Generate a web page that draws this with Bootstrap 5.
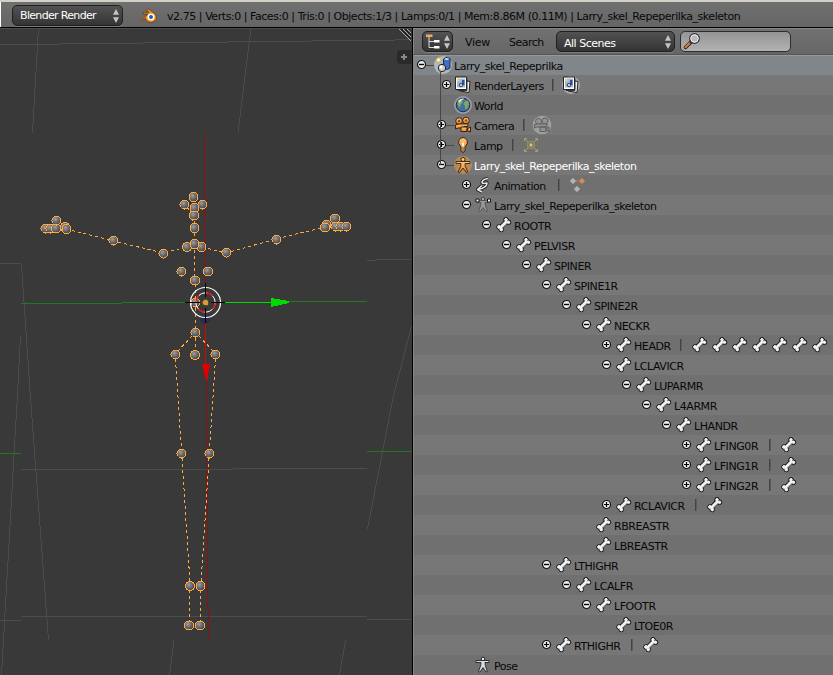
<!DOCTYPE html>
<html lang="en">
<head>
<meta charset="utf-8">
<title>Blender</title>
<link rel="stylesheet" href="https://cdn.jsdelivr.net/npm/bootstrap@5.3.0/dist/css/bootstrap.min.css">
<style>
body{font:11px/20px "DejaVu Sans",sans-serif;color:#080808;background:#393939;width:833px;height:675px;letter-spacing:-.49px}
.info-bar{height:28px;background:linear-gradient(#707070,#656565);border-top:2px solid #d4d0c8;border-bottom:1px solid #000;box-shadow:inset 1px 0 #fff;padding:3px 0 0 12px}
.picker{height:21px;background:linear-gradient(#525252,#343434);border:1px solid #202020;border-radius:5px;color:#fff;box-shadow:0 1px #7b7b7b;padding:0 3px 0 7px;line-height:19px}
.engine{width:111px;letter-spacing:-.67px}.scenes{width:119px;margin-left:12px}.kind{width:31px;padding:0}
.logo{margin:3px 0 0 18px}
.stats{margin-left:10px;line-height:23px;letter-spacing:-.445px}
.view3d{width:412px}
.outliner{border-left:1px solid #000;background:#737373;width:421px}
.tool-bar{height:27px;background:linear-gradient(#727272,#666);border-bottom:1px solid #565656;box-shadow:inset 1px 1px #858585;padding:3px 0 0 9px}
.find{width:111px;height:21px;margin-left:5px;border:1px solid #2e2e2e;border-radius:5px;background:linear-gradient(#949494,#b2b2b2)}
.menu-view{margin-left:12px;width:25px;line-height:23px;letter-spacing:-.3px}.menu-search{margin-left:19px;width:35px;line-height:23px}
.tree{border-left:1px solid #858585}
.line{height:20px;background:#707070;padding-left:calc(var(--depth)*20px)}
.line:nth-child(even){background:#777}
.line:first-child{background:#80868a;box-shadow:inset 0 1px #959a9d}
.fold{width:19px;height:20px;padding-left:2px;padding-top:4px;line-height:0}
.fold.near{padding-left:7px}
.fold svg{width:11px;height:11px;display:block}
.glyph{width:20px;height:20px;display:block}
.name{padding:2px 0 0 1px;white-space:pre;width:var(--w,auto)}
.bone-name{letter-spacing:-.42px}
.lit{color:#fff}
.bar-sep{width:1px;height:12px;background:#444;margin:4px 8px 0 9px;box-shadow:1px 0 #5c5c5c}
.branch{left:12px;top:9px;z-index:1;width:40px;height:108px}
</style>
<script src="https://cdn.jsdelivr.net/npm/bootstrap@5.3.0/dist/js/bootstrap.bundle.min.js"></script>
</head>
<body class="m-0 overflow-hidden">
<svg width="0" height="0" class="position-absolute">
<defs>
<radialGradient id="ball" cx=".38" cy=".35" r=".7"><stop offset="0" stop-color="#a0a0a0"/><stop offset=".4" stop-color="#747478"/><stop offset="1" stop-color="#404046"/></radialGradient>
<linearGradient id="gold" x2="0" y2="1"><stop offset="0" stop-color="#ffc98a"/><stop offset="1" stop-color="#e87d1c"/></linearGradient>
</defs>
<symbol id="arrows" viewBox="0 0 6 14"><path d="M3 0 6 5.800H0zM3 14 0 8.200h6z" fill="#c4c4c4"/></symbol>
<symbol id="plus" viewBox="0 0 11 11"><circle cx="5.5" cy="5.5" r="4" fill="#eee" stroke="#111" stroke-width="1.2"/><path d="M3 5.5h5M5.5 3v5" stroke="#000" stroke-width="1.2"/></symbol>
<symbol id="minus" viewBox="0 0 11 11"><circle cx="5.5" cy="5.5" r="4" fill="#eee" stroke="#111" stroke-width="1.2"/><path d="M3 5.5h5" stroke="#000" stroke-width="1.4"/></symbol>
<symbol id="bone" viewBox="0 0 20 20">
<g fill="#1a1a1a" stroke="#1a1a1a"><path d="M7 13 14 6" stroke-width="4.600"/><circle cx="6" cy="12" r="2.300"/><circle cx="8.300" cy="14.500" r="2.300"/><circle cx="13" cy="4.800" r="2.300"/><circle cx="15.500" cy="7.300" r="2.300"/></g>
<g fill="#f2f2f2" stroke="#f2f2f2"><path d="M7 13 14 6" stroke-width="2.800"/><circle cx="6" cy="12" r="1.400"/><circle cx="8.300" cy="14.500" r="1.400"/><circle cx="13" cy="4.800" r="1.300"/><circle cx="15.500" cy="7.300" r="1.300"/></g><path d="M9.300 13 14 8.400" stroke="#b8b8b8"/></symbol>
<symbol id="scene" viewBox="0 0 20 20"><circle cx="10" cy="10" r="9" fill="#b3b8ba"/><path d="M10.500 4 13 2.500 17 3.500V13L14.500 14.500 10.500 13.500z" fill="#3d6fc4" stroke="#1b2c50"/><path d="M11 4.300 13 3 16.500 3.800 14.500 5z" fill="#dfeaff"/><circle cx="9" cy="13" r="3.700" fill="#ccc" stroke="#222"/><circle cx="8" cy="12" r="1.500" fill="#fff"/><circle cx="5.500" cy="5" r="2" fill="#fffbd0" stroke="#d8c92f"/></symbol>
<symbol id="layers" viewBox="0 0 20 20"><path d="M8 5 17 6.500 16 17.500 7 16z" fill="#eee" stroke="#222"/><path d="M5 3.500h9v12H5z" fill="#fff" stroke="#333"/><path d="M2.500 2h11v12.500h-11z" fill="#fff" stroke="#222"/><path d="M4 3.500h8v9H4z" fill="#9fbce8"/><path d="M9 5h2.500v5H9z" fill="#2c5099"/><circle cx="8" cy="10" r="1.800" fill="#ccc" stroke="#222" stroke-width=".8"/><circle cx="5.500" cy="5" r="1.300" fill="#f2dd3c"/></symbol>
<symbol id="layers2" viewBox="0 0 20 20"><circle cx="10" cy="10" r="9" fill="#aaa"/><use href="#layers" width="20" height="20"/></symbol>
<symbol id="world" viewBox="0 0 20 20"><circle cx="10" cy="10" r="9" fill="#9b9bad"/><circle cx="10" cy="10" r="6.800" fill="#44709f" stroke="#1f2c3c"/><path d="M5 6q3-3 6-2.500L9 6l1 1.500L7.500 10 7 13 4.500 9.500zM12 6l3-.5 1.300 4-2 4-2 1L12 11l-1.500-2z" fill="#7ca865"/><path d="M5 6q3-3 6-2.300Q8 5 6.500 8z" fill="#dceadd"/></symbol>
<symbol id="camera" viewBox="0 0 20 20"><g fill="url(#gold)" stroke="#3c230d"><circle cx="6" cy="6" r="3.300"/><circle cx="13" cy="5.500" r="3.300"/><path d="M6 9h9v2.500h-4L9.500 13H5.500L2.500 14V10z"/><path d="M8 12h6v4.500H8zM14 14l3.500-2v5L14 15.500z"/></g><circle cx="6" cy="6" r="1.200" fill="#8b4a16"/><circle cx="13" cy="5.500" r="1.200" fill="#8b4a16"/></symbol>
<symbol id="camera2" viewBox="0 0 20 20"><circle cx="10" cy="10" r="9.300" fill="#a0a0a0"/><g fill="#929292" stroke="#5f5f5f"><circle cx="6.500" cy="6.500" r="3"/><circle cx="13" cy="6" r="3"/><path d="M5 9h10v3H5L2.500 13V9.500zM8 12h6v4.500H8zM14 14l3-2v4.500L14 15z"/></g></symbol>
<symbol id="lamp" viewBox="0 0 20 20"><path d="M10 2.500a4.700 4.700 0 0 0-3 8l1 1.500v4l2 1.500 2-1.500v-4l1-1.500a4.700 4.700 0 0 0-3-8z" fill="url(#gold)" stroke="#3c230d"/><path d="M9 7.500h2v4H9z" fill="#fff2d8"/><path d="M8 13h4M8 15h4" stroke="#777"/></symbol>
<symbol id="lampdata" viewBox="0 0 20 20"><path d="M6 3.500H3.500V6M14 3.500h2.500V6M6 16.500H3.500V14M14 16.500h2.500V14M4 4l3 3M16 4l-3 3M4 16l3-3M16 16l-3-3" fill="none" stroke="#a3a077"/><circle cx="10" cy="10" r="3.500" fill="#77755a" stroke="#999158" stroke-width="1.200"/><circle cx="10" cy="10" r="1.700" fill="#c5c0a0"/></symbol>
<symbol id="arm" viewBox="0 0 20 20"><circle cx="10" cy="10" r="9" fill="#b18b5b"/><circle cx="10" cy="4.500" r="2" fill="#ffc98a" stroke="#3c230d"/><path d="M3 6.500h14v2H12l.300 3 2.500 5.500-1.500.5L10 13l-3.300 4.500L5 17l2.700-5.500L8 8.500H3z" fill="url(#gold)" stroke="#3c230d" stroke-width=".9"/></symbol>
<symbol id="pose" viewBox="0 0 20 20"><circle cx="10" cy="4" r="1.800" fill="#eee" stroke="#222"/><path d="M3 5.500h13v2H12l.300 3 2 6-1.300.5L10 12.500l-3 4.500-1.500-.5 2.200-6L8 7.500H3z" fill="#ddd" stroke="#222" stroke-width=".9"/></symbol>
<symbol id="armdata" viewBox="0 0 20 20"><circle cx="10" cy="4" r="1.700" fill="#aaa" stroke="#444"/><path d="M5 5.500h10v2h-3l.300 3 2.200 5.500-1.500.5L10 12.500l-3 4-1.500-.5L7.700 10.500 8 7.500H5z" fill="#999" stroke="#4b4b4b" stroke-width=".8"/><path d="M3 4h3v3H3zM14.500 4h3v3h-3z" fill="#fff" stroke="#111"/></symbol>
<symbol id="anim" viewBox="0 0 20 20"><g fill="none" stroke-linejoin="round"><path d="M15 3.500Q9 4.500 9 7.500q1 1.500 5 .5.500 4.500-9 6.500M9 10.500 4.500 14.500l4.500 2.500" stroke="#1a1a1a" stroke-width="3.200"/><path d="M15 3.500Q9 4.500 9 7.500q1 1.500 5 .5.500 4.500-9 6.500M9 10.500 4.500 14.500l4.500 2.500" stroke="#e8e8e8" stroke-width="1.500"/></g></symbol>
<symbol id="keys" viewBox="0 0 20 20"><path d="M6 6h9" stroke="#a87350" stroke-width="2.500"/><g stroke="#666" stroke-width=".6"><path d="M6 2.500 9.500 6 6 9.500 2.500 6zM10 10.500 13.500 14 10 17.500 6.500 14z" fill="#b4b4b4"/><path d="M15 2.500 18.500 6 15 9.500 11.500 6z" fill="#c98f60"/></g></symbol>
</svg>

<header class="info-bar d-flex">
  <div class="picker engine d-flex justify-content-between align-items-center"><span>Blender Render</span><svg width="6" height="14"><use href="#arrows"/></svg></div>
  <svg width="16" height="15" viewBox="0 0 16 15" class="logo flex-shrink-0"><path d="M.8 11.500 7 6H2.300L2 4.300h6L6 2.300 7.500.8l6 4.500q2 1.700 2 4.200c0 2.900-2.500 4.900-5.700 4.900S4.500 12.500 4.300 10.200L2 12.300z" fill="#f08a1d" stroke="#5b3515" stroke-width=".7"/><circle cx="10" cy="9" r="3.500" fill="#fff"/><circle cx="10" cy="9" r="2" fill="#1d5fae"/></svg>
  <span class="stats text-nowrap">v2.75 | Verts:0 | Faces:0 | Tris:0 | Objects:1/3 | Lamps:0/1 | Mem:8.86M (0.11M) | Larry_skel_Repeperilka_skeleton</span>
</header>

<main class="d-flex">
  <section class="view3d">
  <svg class="d-block" width="412" height="647" viewBox="0 28 412 647" fill="none" shape-rendering="crispEdges">
    <path stroke="#4b4b4b" d="M0 28.500H412M0 44.500H59M59 43.500H143M143 42.500H227M227 41.500H311M311 40.500H395M395 39.500H412M38.500 28 32.500 133M251 28 238 133M0 263.500H21M21.500 265 30.500 398 48.500 640M20.500 336 18 385 1.500 675M367 260.500H376M376 259.500H412M411.500 326 393 398 367.500 529M21 469.500H233M233 468.500H367M21 616.500H367M0 620.500H21M367 619.500H412M174 640 169.500 675M345.500 640 339.500 675"/>
    <path stroke="#1f7a1f" d="M0 453.500H21M367 451.500H412M21 303.500H122M122 302.500H186M289 301.500H367"/>
    <path stroke="#8a1212" d="M204.500 133V228M205.500 228V285M206.500 380V487M207.500 487V609M208.500 609V640"/>
    <path d="M200 316h10v5l-5 4-5-4z" fill="#2b2b52"/>
    <g stroke="#ffa93f" stroke-dasharray="3 3">
      <path d="M66 229 114 241 163 253 187 247M202 247 226 253 276 239 325 227M194.500 197V244M194.500 250V276M195.500 284V351M192 336 178 351M199 336 213 351M175.500 359 181.500 450M215.500 359 209.500 450M182 458 190 583M209 458 201 583M189.500 590V622M200.500 590V622"/>
      <path d="M185 205 194 216 203 205M191 215 194 225 197 215" stroke-dasharray="2 2"/>
    </g>
    <g id="joints" fill="url(#ball)" stroke="#ffa93f"></g>
    <path stroke="#00dc00" d="M225 302.500H272"/><path fill="#00dc00" d="M271 298 289 301V303L271 307z"/>
    <path stroke="#e00000" d="M205.500 323V365"/><path fill="#e00000" d="M202 364H210L207 381H206z"/>
    <g shape-rendering="auto"><circle cx="205.500" cy="302.500" r="15" stroke="#fff" stroke-width="1.200"/>
    <circle cx="205.500" cy="302.500" r="9.700" stroke="#fff"/><circle cx="205.500" cy="302.500" r="9.700" stroke="#f00" stroke-width="1.200" stroke-dasharray="7.600 7.600"/></g>
    <path stroke="#000" d="M185 302.500H200M211 302.500H225M205.500 283V297M205.500 308V323"/>
    <circle cx="205.500" cy="302.500" r="3" fill="#d99a3c" stroke="#6a4a1c" stroke-width=".8"/>
    <path stroke="#aaa" d="M399 29 411 41M403 29 411 37M407 29 411 33"/><path stroke="#111" d="M401 29 411 39M405 29 411 35"/>
    <path fill="#2a2a2a" d="M411.500 50H401q-4 0-4 4v6q0 4 4 4H411.500z" shape-rendering="auto"/><path stroke="#888" stroke-width="2" d="M401 57H407M404 54V60"/>
  </svg>
  </section>

  <section class="outliner">
    <div class="tool-bar d-flex">
      <div class="picker kind d-flex justify-content-around align-items-center"><svg width="16" height="17" viewBox="0 0 16 17"><path d="M4 4v10.500h5M4 8.500h5" stroke="#ddd" fill="none"/><path d="M1 1.500h6.500v2.500H1z" fill="#f6a65a"/><path d="M9 7h5.500v2.500H9zM9 13h5.500v2.500H9z" fill="#fff"/></svg><svg width="6" height="14"><use href="#arrows"/></svg></div>
      <span class="menu-view text-nowrap">View</span><span class="menu-search text-nowrap">Search</span>
      <div class="picker scenes d-flex justify-content-between align-items-center"><span class="pt-1">All Scenes</span><svg width="6" height="14"><use href="#arrows"/></svg></div>
      <div class="find"><svg class="d-block" width="24" height="19" viewBox="0 0 24 19"><path d="M4.500 15.500 10 10" stroke="#301c12" stroke-width="3.500" stroke-linecap="round"/><path d="M4.500 15.300 8.500 11.300" stroke="#cf7f4d" stroke-width="2" stroke-linecap="round"/><circle cx="13.500" cy="6.500" r="4.800" fill="#bbb6c4" stroke="#333" stroke-width="1.200"/><circle cx="13.500" cy="6.500" r="3.700" fill="none" stroke="#eee"/></svg></div>
    </div>
    <div class="position-relative">
      <svg class="branch position-absolute" viewBox="0 0 40 108" shape-rendering="crispEdges"><path d="M1 1.500H9M15.500 8V101M21 61.500H29M21 81.500H29M21 101.500H29" stroke="#464646" fill="none"/></svg>
      <div class="tree" id="tree"></div>
    </div>
  </section>
</main>

<script>
// depth, fold marker, icon, name, icons of the folded children, width of the name's column
const rows = [
 [0,'minus','scene','Larry_skel_Repeprilka'],[1,'plus near','layers','RenderLayers',['layers2'],70],[1,'','world','World'],
 [1,'plus','camera','Camera',['camera2'],41],[1,'plus','lamp','Lamp',['lampdata'],30],[1,'minus','arm','Larry_skel_Repeperilka_skeleton'],
 [2,'plus near','anim','Animation',['keys'],56],[2,'minus near','armdata','Larry_skel_Repeperilka_skeleton'],
 [3,'minus near','bone','ROOTR'],[4,'minus near','bone','PELVISR'],[5,'minus near','bone','SPINER'],[6,'minus near','bone','SPINE1R'],
 [7,'minus near','bone','SPINE2R'],[8,'minus near','bone','NECKR'],[9,'plus near','bone','HEADR',Array(7).fill('bone'),38],
 [9,'minus near','bone','LCLAVICR'],[10,'minus near','bone','LUPARMR'],[11,'minus near','bone','L4ARMR'],[12,'minus near','bone','LHANDR'],
 [13,'plus near','bone','LFING0R',['bone'],47],[13,'plus near','bone','LFING1R',['bone'],47],[13,'plus near','bone','LFING2R',['bone'],47],
 [9,'plus near','bone','RCLAVICR',['bone'],53],[8,'','bone','RBREASTR'],[8,'','bone','LBREASTR'],
 [6,'minus near','bone','LTHIGHR'],[7,'minus near','bone','LCALFR'],[8,'minus near','bone','LFOOTR'],[9,'','bone','LTOE0R'],
 [6,'plus near','bone','RTHIGHR',['bone'],49],[2,'','pose','Pose']];
const glyph = n => `<svg class="glyph flex-shrink-0"><use href="#${n}"/></svg>`;
document.getElementById('tree').innerHTML = rows.map(([d,f,i,n,kids,w]) =>
 `<div class="line d-flex overflow-hidden" style="--depth:${d}${w?`;--w:${w}px`:''}"><div class="fold flex-shrink-0 ${f.includes('near')?'near':''}">${f?`<svg><use href="#${f.split(' ')[0]}"/></svg>`:''}</div>${glyph(i)}<span class="name flex-shrink-0 ${i==='arm'?'lit':''} ${i==='bone'?'bone-name':''}">${n}</span>${kids?'<i class="bar-sep flex-shrink-0"></i>'+kids.map(glyph).join(''):''}</div>`).join('');

// joint centres of the armature
const joints = [[184.5,204.5],[202.5,204.5],[194.5,208],[194,215.5],[193.5,197],[194.5,228],[187,247],[201.5,247],[194.5,244],[163.5,253.5],[113.5,240.5],
 [45.5,228.5],[50.5,228.5],[56,228.5],[56.5,220.5],[65,227],[66.5,229],[226.5,252.5],[276.5,239.5],[335,218.5],[326.5,225],[325,227.5],[335.5,226.5],[340.5,226.5],[346.5,226.5],
 [181.5,271.5],[208,271.5],[195,280.5],[195.5,302.5],[195.5,332.5],[175.5,354.5],[195,355],[215.5,354.5],[181.5,453.5],[209.5,453.5],[190,586],[200.5,586],[189,625.5],[200,625.5]];
document.getElementById('joints').innerHTML = joints.map(([x,y]) => `<circle cx="${x}" cy="${y}" r="4.5"/>`).join('');
</script>
</body>
</html>
